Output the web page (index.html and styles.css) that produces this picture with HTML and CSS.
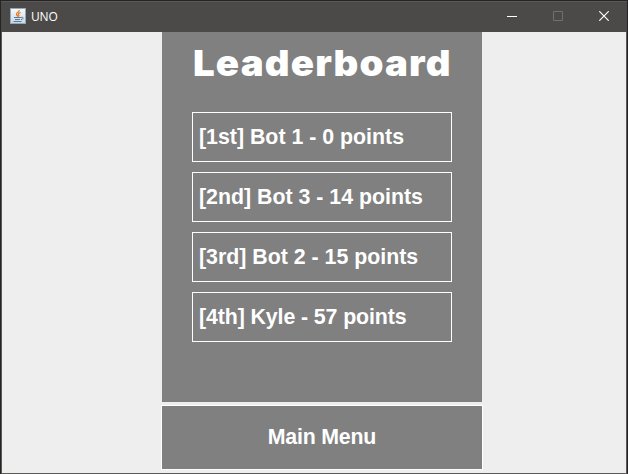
FILE: index.html
```html
<!DOCTYPE html>
<html lang="en">
<head>
<meta charset="utf-8">
<title>UNO</title>
<link rel="stylesheet" href="styles.css">
</head>
<body>
<div class="window">
  <header class="titlebar">
    <svg class="app-icon" width="16" height="16" viewBox="0 0 16 16">
      <defs><linearGradient id="tile" x2="0" y2="1"><stop stop-color="#f8f9fa"/><stop offset="1" stop-color="#cbd8e2"/></linearGradient></defs>
      <rect x=".5" y=".5" width="15" height="15" fill="url(#tile)" stroke="#8fa9bd"/>
      <path d="M9.2 2C9.7 4 6 4.7 6.5 6.5C6.7 7.3 7.6 7.8 7.8 8.7M10.7 4.5C8.7 5.1 8 5.9 8.7 6.8C9.1 7.4 8.9 8 8.3 8.5" fill="none" stroke="#e87a25" stroke-width="1.3"/>
      <path d="M4 9.5H11M5 11.5H10M3.5 13.5H11.5M11 9.5C14 8.5 13.7 11.4 11 11.6" fill="none" stroke="#557b9b"/>
    </svg>
    <span class="app-name">UNO</span>
    <div class="controls">
      <svg width="10" height="10" viewBox="0 0 10 10"><path d="M0 5.5H10" stroke="#fff"/></svg>
      <svg width="10" height="10" viewBox="0 0 10 10"><path d="M.5 .5H9.5V9.5H.5Z" fill="none" stroke="#71706e"/></svg>
      <svg width="10" height="10" viewBox="0 0 10 10"><path d="M.3 .3L9.7 9.7M9.7 .3L.3 9.7" stroke="#fff" stroke-width="1.2"/></svg>
    </div>
  </header>
  <main class="content">
    <section class="board">
      <h1 class="heading"><span class="heading-text">Leaderboard</span></h1>
      <ol class="ranks">
        <li class="rank">[1st] Bot 1 - 0 points</li>
        <li class="rank">[2nd] Bot 3 - 14 points</li>
        <li class="rank">[3rd] Bot 2 - 15 points</li>
        <li class="rank rank-last">[4th] Kyle - 57 points</li>
      </ol>
    </section>
    <button class="menu-button">Main Menu</button>
  </main>
</div>
</body>
</html>
```

FILE: styles.css
```css
* { box-sizing: border-box; }
body { margin: 0; background: #242424; font-family: "Liberation Sans", Arial, sans-serif; }
.window {
  width: 628px;
  height: 474px;
  display: flex;
  flex-direction: column;
  border: 1px solid #242424;
  border-bottom: 0;
}
.titlebar {
  height: 31px;
  flex: none;
  display: flex;
  align-items: center;
  padding-left: 9px;
  background: #4c4a48;
  border-top: 1px solid #5b5957;
}
.app-icon { display: block; margin-top: -2px; }
.app-name {
  margin-left: 5px;
  color: #fff;
  font: 12px/16px "Open Sans", sans-serif;
  letter-spacing: -0.2px;
}
.controls { margin-left: auto; margin-top: -2px; display: flex; margin-right: 18px; gap: 36px; }
.controls svg { display: block; }
.content {
  flex: 1;
  display: flex;
  flex-direction: column;
  align-items: center;
  padding-left: 16px;
  background: #eee;
  border: 1px solid #5b5957;
  border-top: 0;
}
.board {
  width: 320px;
  height: 370px;
  padding: 0 30px;
  background: #808080;
}
.heading {
  margin: 0;
  height: 80px;
  padding: 6px 0 0 1px;
  color: #fff;
  font: 900 36px/50px Inter, sans-serif;
  white-space: nowrap;
}
.heading-text {
  display: inline-block;
  letter-spacing: 1.1px;
  transform: scaleX(1.066);
  transform-origin: left;
}
.ranks {
  margin: 0;
  padding: 0;
  list-style: none;
  display: grid;
  gap: 10px;
}
.rank {
  height: 50px;
  padding-left: 6px;
  border: 1px solid #fff;
  color: #fff;
  font-size: 21.33px;
  font-weight: bold;
  line-height: 48px;
  white-space: nowrap;
}
.rank-last { letter-spacing: -0.1px; }
.menu-button {
  width: 322px;
  height: 65px;
  margin-top: 3px;
  padding: 0;
  border: 1px solid #fff;
  background: #808080;
  color: #fff;
  font: bold 21.33px/61px "Liberation Sans", Arial, sans-serif;
  letter-spacing: -0.2px;
}
```
